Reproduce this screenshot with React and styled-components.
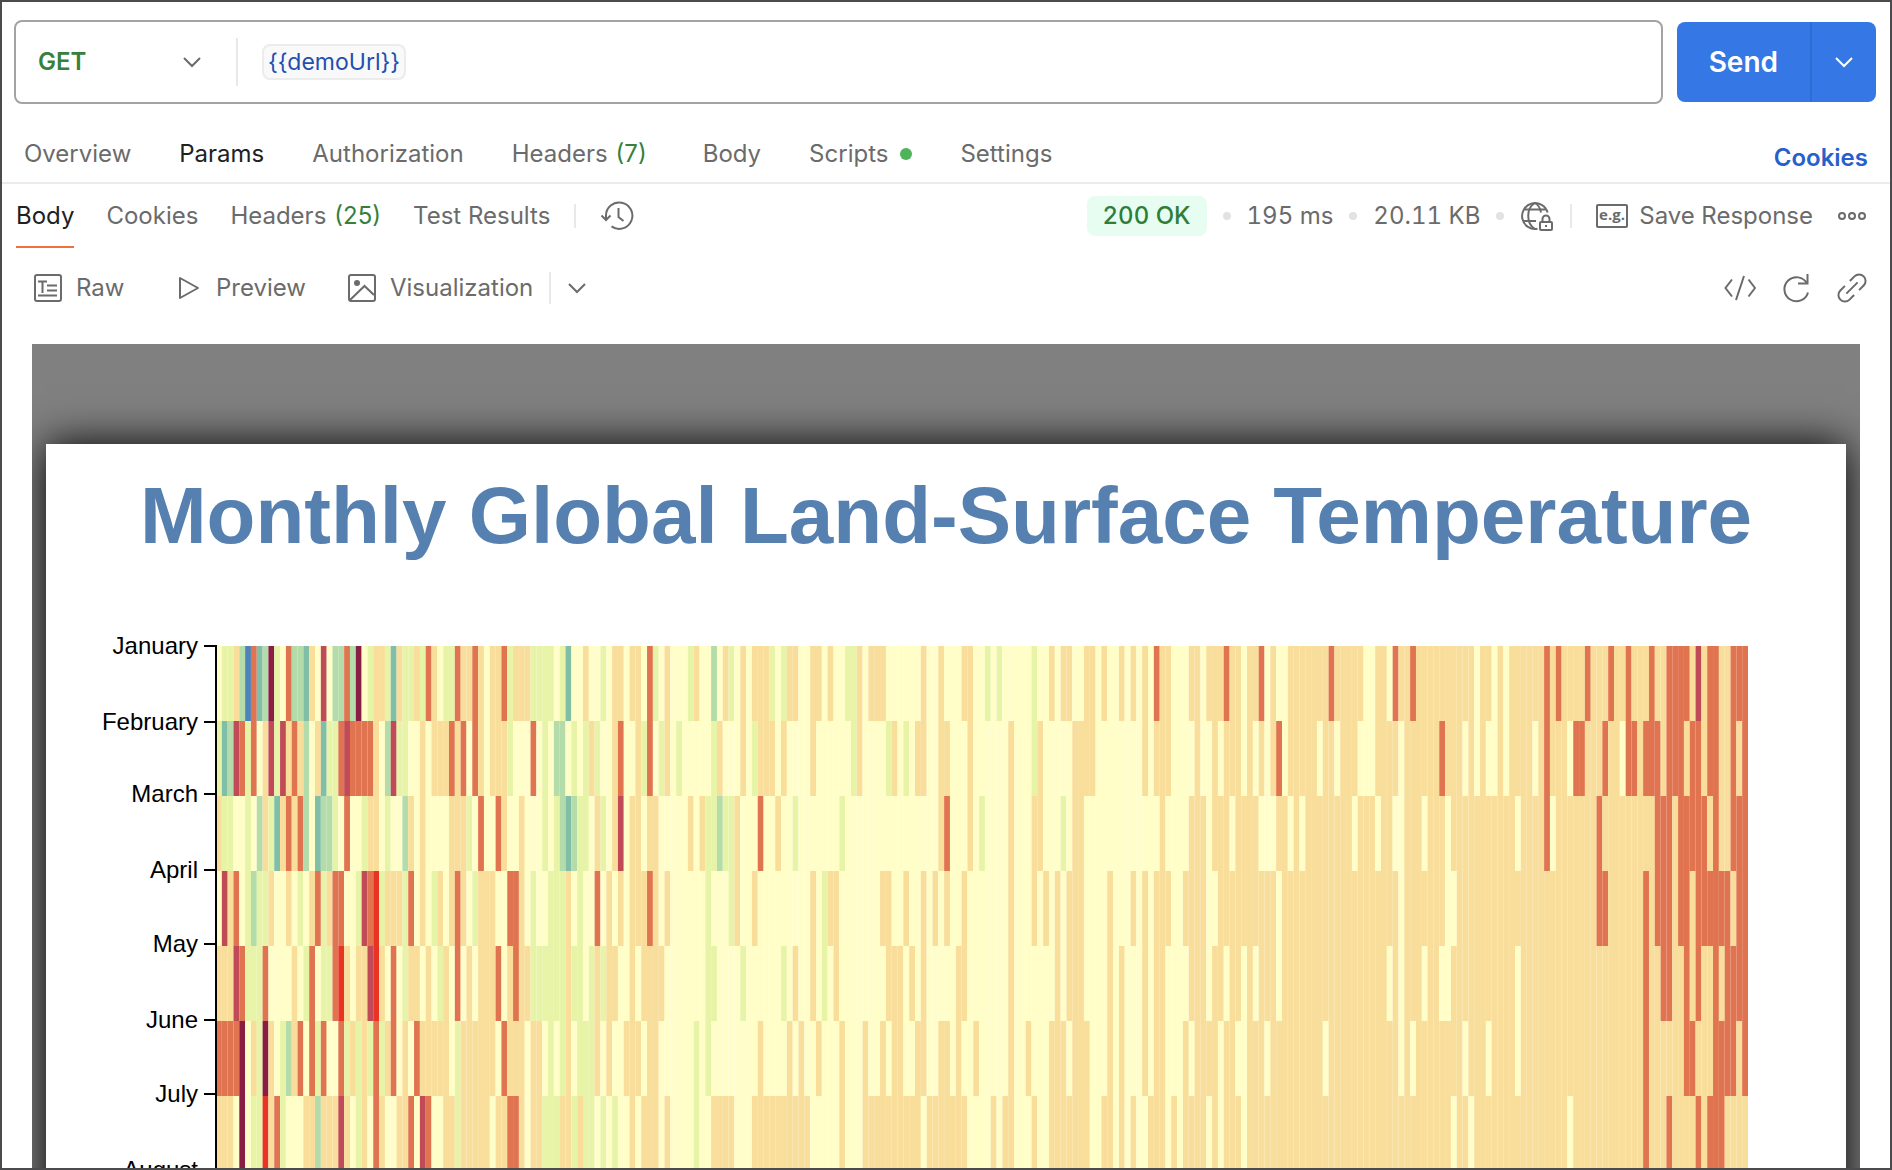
import React, { useState } from 'react';
import styled, { createGlobalStyle } from 'styled-components';

const GlobalStyle = createGlobalStyle`
    * {
        box-sizing: border-box;
    }

    body {
        margin: 0;
        background-color: #fff;
        color: #6b6b6b;
        font-family: Inter, "Liberation Sans", sans-serif;
        font-size: 24px;
        line-height: 32px;
    }

    button, input, select {
        font: inherit;
        color: inherit;
    }
`;

const Window = styled.div`
    display: flex;
    flex-direction: column;
    height: 100vh;
    border: 2px solid #4b4b4d;
    overflow: hidden;
`;

// request line
const RequestBar = styled.form`
    display: flex;
    align-items: center;
    gap: 14px;
    padding: 18px 14px 0 12px;
`;

const UrlBox = styled.div`
    display: flex;
    align-items: center;
    flex: 1;
    height: 84px;
    border: 2px solid #a3a3a3;
    border-radius: 8px;
`;

const MethodPicker = styled.div`
    display: grid;
    align-items: center;
    width: 220px;
`;

const MethodSelect = styled.select`
    grid-area: 1 / 1;
    width: 100%;
    padding: 8px 22px;
    border: none;
    background: none;
    appearance: none;
    color: #36803c;
    font-weight: 600;
`;

const PickerIcon = styled.span`
    grid-area: 1 / 1;
    justify-self: end;
    display: flex;
    padding-right: 34px;
    pointer-events: none;
`;

const Separator = styled.span`
    flex: none;
    width: 2px;
    height: ${props => props.height}px;
    background-color: #e8e8e8;
`;

const UrlLabel = styled.label`
    display: flex;
    flex: 1;
    padding-left: 24px;
`;

const UrlInput = styled.input`
    field-sizing: content;
    height: 36px;
    padding: 0 4px;
    border: 2px solid #ececec;
    border-radius: 8px;
    background-color: #f9f9f9;
    color: #1f50b0;
    font-size: 23px;
    outline: none;
`;

const SendGroup = styled.div`
    display: flex;
    height: 80px;
    border-radius: 8px;
    background-color: #3578e5;
    color: #fff;
    overflow: hidden;
`;

const SendButton = styled.button`
    padding: 0 32px;
    border: none;
    background: none;
    font-size: 28px;
    font-weight: 600;
    cursor: pointer;
`;

const SendMenuButton = styled.button`
    display: flex;
    align-items: center;
    justify-content: center;
    width: 66px;
    padding: 0;
    border: none;
    border-left: 2px solid #2f6dd6;
    background: none;
    cursor: pointer;
`;

// tab rows
const RequestTabs = styled.nav`
    display: flex;
    align-items: center;
    gap: 48px;
    height: 80px;
    padding: 22px 22px 0 22px;
    border-bottom: 2px solid #ebebeb;
`;

const Tab = styled.button`
    display: flex;
    align-items: center;
    gap: ${props => props.gap || 8}px;
    height: 100%;
    padding: 0;
    border: none;
    background: none;
    color: ${props => (props.active ? '#212121' : '#6b6b6b')};
    box-shadow: ${props => (props.underline ? 'inset 0 -2px 0 #f0703f' : 'none')};
    white-space: nowrap;
    cursor: pointer;
`;

const Count = styled.span`
    padding-right: ${props => props.space || 0}px;
    color: #36803c;
`;

const ScriptDot = styled.span`
    width: 12px;
    height: 12px;
    border-radius: 50%;
    background-color: #4fb35b;
`;

const CookiesLink = styled.a`
    margin-left: auto;
    padding-top: 8px;
    color: #2760cb;
    font-weight: 600;
    text-decoration: none;
`;

const ResponseBar = styled.div`
    display: flex;
    align-items: center;
    justify-content: space-between;
    height: 64px;
    padding: 0 22px 0 14px;
`;

const ResponseTabs = styled.nav`
    display: flex;
    align-items: center;
    gap: 32px;
    height: 100%;
`;

const TabTools = styled.div`
    display: flex;
    align-items: center;
    gap: 24px;
`;

const ResponseTools = styled.div`
    display: flex;
    align-items: center;
    gap: 24px;
    height: 100%;
`;

const Meta = styled.div`
    display: flex;
    align-items: center;
    gap: ${props => props.gap}px;
    font-variant-numeric: tabular-nums;
    white-space: nowrap;
`;

const StatusBadge = styled.span`
    padding: 4px 16px;
    border-radius: 8px;
    background-color: #e7fdf2;
    color: #2f7d38;
    font-weight: 500;
`;

const MetaDot = styled.span`
    width: 8px;
    height: 8px;
    border-radius: 50%;
    background-color: #e2e2e2;
`;

const IconButton = styled.button`
    display: flex;
    align-items: center;
    gap: ${props => props.gap || 0}px;
    min-width: ${props => props.minWidth || 0}px;
    padding: 0;
    border: none;
    background: none;
    color: #6b6b6b;
    white-space: nowrap;
    cursor: pointer;
`;

const ViewBar = styled.div`
    display: flex;
    align-items: center;
    justify-content: space-between;
    height: 80px;
    padding: 0 22px 0 30px;
`;

const ViewModes = styled.div`
    display: flex;
    align-items: center;
    gap: 40px;
`;

const SplitMode = styled.div`
    display: flex;
    align-items: center;
    gap: 16px;
`;

const ViewTools = styled.div`
    display: flex;
    align-items: center;
    gap: 24px;
`;

// visualization
const Viewer = styled.main`
    flex: 1;
    min-height: 0;
    margin: 16px 30px 0;
    padding: 100px 14px 0;
    background-color: #808080;
    overflow: hidden;
`;

const ChartCard = styled.section`
    height: 100%;
    min-height: 800px;
    padding-top: 32px;
    background-color: #fff;
    box-shadow: 0 0 40px #000;
`;

const ChartTitle = styled.h1`
    margin: 0;
    color: #5580b0;
    font-family: "Liberation Sans", Arial, sans-serif;
    font-size: 80px;
    font-weight: 700;
    line-height: 80px;
    text-align: center;
    white-space: nowrap;
`;

const ChartSvg = styled.svg`
    display: block;
    width: 100%;

    text {
        font-family: "Liberation Sans", Arial, sans-serif;
        font-size: 24px;
        fill: #000;
    }
`;

const COLORS = {
    b: '#4e82b8',
    t: '#80bea8',
    m: '#b3dcaa',
    g: '#e7f4a8',
    y: '#fffec8',
    o: '#f8de9a',
    r: '#e07350',
    R: '#e93323',
    c: '#c04a56',
    d: '#8a1d44',
};

// one letter per year, grouped by ten inside blocks of 44 years
const ROWS = [
    `yggombrtmd gyrmmtoycy mmrmdygoog toggogroyg groo
     royoorgooo ggggygtyyo yygyooyooy rgyoyyygoy ymyo
     gyoyooogyg ooyyooyoyy ggoyoooyyy yyyoyyoyyy ooyy
     gygyyyyygy yoyooyyooy oyyoyoyoyr ooyyyooyoo oroo
     yooryoyyoo oooooroooo oyyooyroor oooooooooo yooy
     oyooooooro roooorooor ooroooroor rrrocorroo rrr`,
    `gtmcrgryoc gcoromyotg grcrrrroym cggyyoyooo rory
     royooogyyy rygymmygyg ogyyoryyog rygoygyyyy ygoy
     yyoygoooyo yyyyoyyyyy ygoyyyygoy gyooyyooyy yoyy
     yyyyoyyygo yyyyyooooy yyyyyyyoyo ooyyyyoyyo yooo
     yoyoyoryoo oooyooyooo yyyooooyoo ooooroooyo yoyy
     oyooooyoro ooyrroooro oyrrorrror rrorrorroo ror`,
    `oggyygymog torormytmm gyryygooyg yymoyoyyyy ooog
     yryyroyyoy yygygmtmgg yogyocyooy ooyyyyyoyo ggmg
     goyyyryyoy ygyyyyyyyg yyyyyyyyyy yyyyyyoryy yoyg
     yyyyoyyyoo yyygyooyyy yyyyyyyyyy oyyyyoooyo ooyo
     oooyyyooyo yooooooooy oooyooyyoo oyoooyoooo oooo
     oooyoooory oooooooroo ooooooorrr orrrrroroo rrr`,
    `ycorygmggo yyoygyorgo rryygcrRgo oogryoygoy oroy
     goooyyrroy gyygggoygy yryoyoyooo royoyyyyyy gyyy
     goyyoyyyyy yyyyoygooy yyyyyyooyy oyyoyoyoyy oyyy
     yyyyoyyyoy oyoyoooyyy yoyyyoyoyo ooyyooooyy oooo
     ooooooyooo oooooooooo oooooooyoo oooooyyooo oooo
     oooooooooo ooooooorro ooooororrr orrorrrrrr orr`,
    `ooocrgggry yyyoygrygg rRoyoocRoy rygooyoygo yryo
     yoooryoroo ggggggoggy gogooyyoyo oooyyyyyyy ggyy
     yygyyyyyyg yoyyoygyoy yyyyyyyooo yoyoyyyyyo oyyy
     yyyyoyyyyy yyoyoooyyy yoyoyyyoyo oyyyyoooyo oyoo
     yoyoooyooo oooooooooo oooooyoyoo oyooyyoooo oooo
     oooyoooooo oooooooooo oooooroorr oororooror rrr`,
    `rrrrdyogdo ygmoryrgry yrgogogrgo ryoyrooooo ygoo
     ooooyroooy ooygygoygg goyoyyoooy ooyyyyyygy gyyy
     yyyyyoyyyy oyoyyoyyyo yyyoyyoyoo yyooyyooyo yyoy
     yyyyoyyoyy yoooyoooyy yoyoyyyoyo oyyyoyoooo yooy
     yoooyooooo ooooyooooo oooooooyoy ooooooooyo ooyo
     oooyoooooo oooooooooo oooooroooo oorrooorrr ror`,
    `oooydyggRo rgyyyoomoo ocoygoyroy yoorycryyo ogoo
     oooyoorroy oogggoogog gygygyyoyo ooyoyyyygy yooo
     oyyyoooooo ooooyyyyyo yyyooooooo oooyoooooo oyyy
     yoyooyyyoy yoooooooyy ooyoyoyyoo oyoyooooyo yooo
     yooooooooo oooooooooo oooooooooo ooooooyooy oooo
     oooooooooo ooyooooooo ooooorooor oooororrro ooo`,
];

const MONTHS = [
    { name: 'January', y: 0 },
    { name: 'February', y: 76 },
    { name: 'March', y: 148 },
    { name: 'April', y: 224 },
    { name: 'May', y: 298 },
    { name: 'June', y: 374 },
    { name: 'July', y: 448 },
    { name: 'August', y: 524 },
];

const YEARS = 263;
const CELL_WIDTH = 1532 / YEARS;
const CELL_HEIGHT = 75;

const Icon = ({ width = 32, height = 32, children }) => (
    <svg
        width={width}
        height={height}
        viewBox={`0 0 ${width} ${height}`}
        fill="none"
        stroke="currentColor"
        strokeWidth="2"
        aria-hidden="true"
    >
        {children}
    </svg>
);

const ChevronIcon = () => (
    <Icon width={20} height={20}>
        <path d="M2 6l8 8 8-8" />
    </Icon>
);

const HistoryIcon = () => (
    <Icon width={34}>
        <path d="M6 19v-3a13.2 13.2 0 1 1 5.5 10.4" />
        <path d="M1.500 15.500L6 20l4.500-4.500" />
        <path d="M18.500 8v9l5 4" />
    </Icon>
);

const GlobeLockIcon = () => (
    <Icon width={34}>
        <path d="M17.500 28.800A13 13 0 1 1 27.600 12.500" />
        <path d="M15 29c-9-5-9-21 0-26 3.400 2 5.400 5.600 6 9.500" />
        <path d="M4.500 9.500h21M3.500 21H16M15 29h2" />
        <rect x="20" y="22" width="12" height="8" rx="1" />
        <path d="M22.500 22v-3a3.500 3.500 0 0 1 7 0v3M26 25v2" />
    </Icon>
);

const ExampleIcon = () => (
    <Icon width={34}>
        <rect x="2" y="5" width="30" height="22" rx="1" />
        <text
            x="17"
            y="20"
            textAnchor="middle"
            fontFamily="Open Sans, sans-serif"
            fontSize="15"
            fontWeight="700"
            fill="currentColor"
            stroke="none"
        >
            e.g.
        </text>
    </Icon>
);

const MoreIcon = () => (
    <Icon>
        <circle cx="6" cy="16" r="3" />
        <circle cx="16" cy="16" r="3" />
        <circle cx="26" cy="16" r="3" />
    </Icon>
);

const RawIcon = () => (
    <Icon>
        <rect x="3" y="3" width="26" height="26" rx="2" />
        <path d="M6 9.500h9M10.500 9.500V21M15 13.500h10M15 18.500h10M6 23.500h19" />
    </Icon>
);

const PlayIcon = () => (
    <Icon>
        <path d="M8 6v20l18-10z" strokeLinejoin="round" />
    </Icon>
);

const ImageIcon = () => (
    <Icon>
        <rect x="3" y="3" width="26" height="26" rx="2" />
        <circle cx="11" cy="11" r="3" fill="currentColor" stroke="none" />
        <path d="M4 28l14.500-14L28 23" />
    </Icon>
);

const CodeIcon = () => (
    <Icon>
        <path d="M8 7.500L1.500 16 8 24.500M24.500 7.500L31 16l-6.500 8.500M20 4l-8 24" />
    </Icon>
);

const RefreshIcon = () => (
    <Icon>
        <path d="M27 11.500A12 12 0 1 0 28 20.500" />
        <path d="M27.500 2v9.500H18" />
    </Icon>
);

const LinkIcon = () => (
    <Icon>
        <g transform="translate(16 16) rotate(-45)">
            <path d="M3.500-6.500H10a6.500 6.500 0 0 1 0 13H3.500M-3.500-6.500H-10a6.500 6.500 0 0 0 0 13h6.500M-8 0H8" />
        </g>
    </Icon>
);

const HeatMap = () => (
    <ChartSvg viewBox="0 0 1800 640" role="img" aria-label="Monthly temperature heat map">
        <g transform="translate(170 90)">
            {ROWS.map((row, month) =>
                row.replace(/\s/g, '').split('').map((key, year) => (
                    <rect
                        key={`${month}-${year}`}
                        x={year * CELL_WIDTH}
                        y={month * CELL_HEIGHT}
                        width={CELL_WIDTH}
                        height={CELL_HEIGHT}
                        fill={COLORS[key]}
                    />
                ))
            )}
            <path d="M0 -1V550" stroke="#000" strokeWidth="2" />
            {MONTHS.map(month => (
                <g key={month.name} transform={`translate(0 ${month.y})`}>
                    <path d="M-12 0H0" stroke="#000" strokeWidth="2" />
                    <text x="-18" dy="8" textAnchor="end">{month.name}</text>
                </g>
            ))}
        </g>
    </ChartSvg>
);

const App = () => {
    const [url, setUrl] = useState('{{demoUrl}}');
    const [method, setMethod] = useState('GET');

    return (
        <>
            <GlobalStyle />
            <Window>
                <RequestBar onSubmit={e => e.preventDefault()}>
                    <UrlBox>
                        <MethodPicker>
                            <MethodSelect
                                aria-label="Method"
                                value={method}
                                onChange={e => setMethod(e.target.value)}
                            >
                                <option>GET</option>
                                <option>POST</option>
                                <option>PUT</option>
                                <option>DELETE</option>
                            </MethodSelect>
                            <PickerIcon><ChevronIcon /></PickerIcon>
                        </MethodPicker>
                        <Separator height={48} />
                        <UrlLabel>
                            <UrlInput
                                type="text"
                                aria-label="URL"
                                value={url}
                                onChange={e => setUrl(e.target.value)}
                            />
                        </UrlLabel>
                    </UrlBox>
                    <SendGroup>
                        <SendButton type="submit">Send</SendButton>
                        <SendMenuButton type="button" aria-label="Send options">
                            <ChevronIcon />
                        </SendMenuButton>
                    </SendGroup>
                </RequestBar>

                <RequestTabs>
                    <Tab>Overview</Tab>
                    <Tab active>Params</Tab>
                    <Tab>Authorization</Tab>
                    <Tab>Headers <Count space={8}>(7)</Count></Tab>
                    <Tab>Body</Tab>
                    <Tab gap={12}>Scripts <ScriptDot /></Tab>
                    <Tab>Settings</Tab>
                    <CookiesLink href="#cookies">Cookies</CookiesLink>
                </RequestTabs>

                <ResponseBar>
                    <ResponseTools>
                        <ResponseTabs>
                            <Tab active underline>Body</Tab>
                            <Tab>Cookies</Tab>
                            <Tab>Headers <Count>(25)</Count></Tab>
                            <Tab>Test Results</Tab>
                        </ResponseTabs>
                        <TabTools>
                            <Separator height={24} />
                            <IconButton aria-label="History"><HistoryIcon /></IconButton>
                        </TabTools>
                    </ResponseTools>
                    <Meta gap={23}>
                        <Meta gap={16}>
                            <StatusBadge>200 OK</StatusBadge>
                            <MetaDot />
                            <span>195 ms</span>
                            <MetaDot />
                            <span>20.11 KB</span>
                            <MetaDot />
                            <IconButton aria-label="Network"><GlobeLockIcon /></IconButton>
                            <Separator height={24} />
                        </Meta>
                        <IconButton gap={10}><ExampleIcon />Save Response</IconButton>
                        <IconButton aria-label="More"><MoreIcon /></IconButton>
                    </Meta>
                </ResponseBar>

                <ViewBar>
                    <ViewModes>
                        <IconButton gap={12} minWidth={100}><RawIcon />Raw</IconButton>
                        <IconButton gap={12}><PlayIcon />Preview</IconButton>
                        <SplitMode>
                            <IconButton gap={12}><ImageIcon />Visualization</IconButton>
                            <Separator height={32} />
                            <IconButton aria-label="View options"><ChevronIcon /></IconButton>
                        </SplitMode>
                    </ViewModes>
                    <ViewTools>
                        <IconButton aria-label="Code"><CodeIcon /></IconButton>
                        <IconButton aria-label="Refresh"><RefreshIcon /></IconButton>
                        <IconButton aria-label="Copy link"><LinkIcon /></IconButton>
                    </ViewTools>
                </ViewBar>

                <Viewer>
                    <ChartCard>
                        <ChartTitle>Monthly Global Land-Surface Temperature</ChartTitle>
                        <HeatMap />
                    </ChartCard>
                </Viewer>
            </Window>
        </>
    );
};

export default App;
